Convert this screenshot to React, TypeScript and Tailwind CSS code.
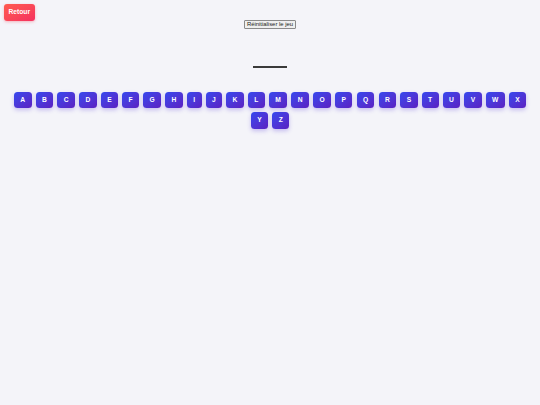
import React from "react";

const letters = "ABCDEFGHIJKLMNOPQRSTUVWXYZ".split("");

export default function App() {
  return (
    <div className="relative min-h-screen w-full bg-[#f4f4f9]" style={{ fontFamily: '"Liberation Sans", Arial, sans-serif' }}>
      <button className="absolute left-[4px] top-[4px] rounded-[3px] bg-gradient-to-br from-[#ff5a4e] to-[#f5305f] px-[4.5px] py-[4.3px] text-[6.7px] font-bold leading-[8px] text-white shadow-[0_1px_3px_rgba(240,60,80,0.35)]">
        Retour
      </button>
      <div className="flex flex-col items-center pt-[20px]">
        <button className="h-[9px] rounded-[1px] border border-[#8a8a8a] bg-[#efefef] px-[2px] text-[5.9px] leading-[7px] text-[#222]">
          Réinitialiser le jeu
        </button>
        <div className="mt-[36.5px] h-[2px] w-[34px] bg-[#3a3a3a]" />
        <div className="mt-[22.5px] flex w-full flex-wrap justify-center px-[10px]">
          {letters.map((l) => (
            <button
              key={l}
              className="m-[2.05px] rounded-[3.5px] bg-gradient-to-br from-[#3348ee] to-[#5a1fc2] px-[6.4px] py-[4.1px] text-[6.7px] font-bold leading-[8px] text-white shadow-[0_2px_4px_rgba(91,60,220,0.3)]"
            >
              {l}
            </button>
          ))}
        </div>
      </div>
    </div>
  );
}
